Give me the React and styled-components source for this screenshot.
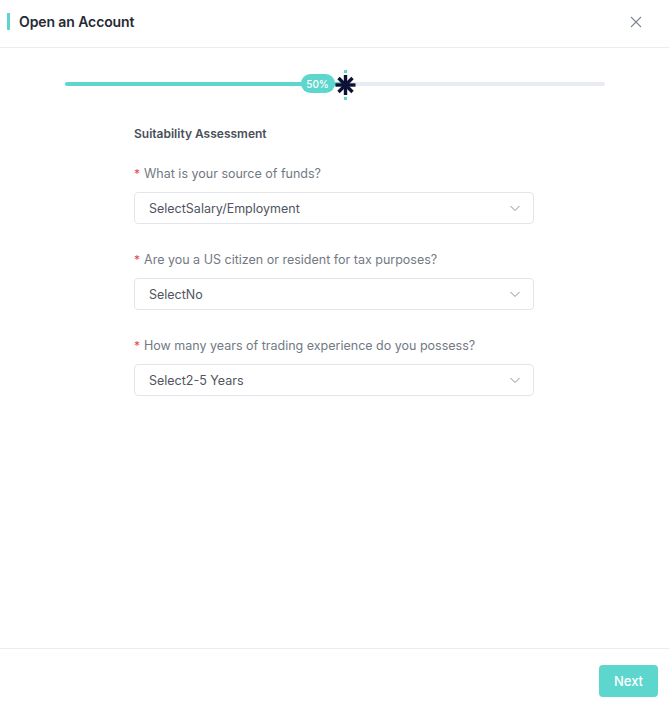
import React from "react";
import styled, { createGlobalStyle } from "styled-components";

const Global = createGlobalStyle`
  html, body { margin: 0; padding: 0; background: #fff; }
  body { font-family: Inter, "Noto Sans", sans-serif; }
  * { box-sizing: border-box; }
`;

const Modal = styled.div`
  width: 669px;
  height: 708px;
  display: flex;
  flex-direction: column;
  background: #fff;
`;

const Header = styled.div`
  height: 48px;
  flex: none;
  display: flex;
  align-items: center;
  justify-content: space-between;
  padding: 0 26px 4px 7px;
  border-bottom: 1px solid #ececec;
`;

const Title = styled.div`
  display: flex;
  align-items: center;
  gap: 9px;
  font-size: 14px;
  font-weight: 600;
  color: #262a33;
  letter-spacing: -0.1px;
`;

const TitleBar = styled.span`
  width: 3px;
  height: 17px;
  background: #5dd6cd;
  display: block;
`;

const CloseBtn = styled.button`
  border: 0;
  background: none;
  padding: 0;
  width: 14px;
  height: 14px;
  display: flex;
  cursor: pointer;
`;

const Body = styled.div`
  flex: 1;
  display: flex;
  flex-direction: column;
  align-items: center;
  padding-top: 22px;
`;

const SliderWrap = styled.div`
  width: 540px;
  height: 28px;
  position: relative;
  display: flex;
  align-items: center;
`;

const Track = styled.div`
  width: 100%;
  height: 4px;
  border-radius: 2px;
  background: #e8ecf2;
  overflow: hidden;
`;

const Fill = styled.div`
  height: 100%;
  background: #5dd6cd;
`;

const Badge = styled.div`
  position: absolute;
  top: 4px;
  left: 236px;
  width: 34px;
  height: 19px;
  border-radius: 10px;
  background: #5dd6cd;
  color: #fff;
  font-size: 10px;
  font-weight: 500;
  display: flex;
  align-items: center;
  justify-content: center;
`;

const Handle = styled.div`
  position: absolute;
  left: 270px;
  top: 0;
  width: 22px;
  height: 30px;
`;

const Form = styled.div`
  width: 400px;
  margin-right: 1px;
  display: flex;
  flex-direction: column;
  padding-top: 28px;
`;

const SectionTitle = styled.div`
  font-size: 12px;
  font-weight: 600;
  color: #4a4f5a;
  margin-bottom: 25px;
`;

const Field = styled.div`
  display: flex;
  flex-direction: column;
  gap: 11px;
  margin-bottom: 28px;
`;

const Label = styled.div`
  font-size: 12.5px;
  color: #737983;
  display: flex;
  gap: 4px;
  align-items: center;
`;

const Req = styled.span`
  color: #e5484d;
  font-size: 12px;
`;

const Select = styled.div`
  height: 32px;
  border: 1px solid #e2e6ec;
  border-radius: 4px;
  display: flex;
  align-items: center;
  justify-content: space-between;
  padding: 0 12px 0 14px;
  font-size: 12.5px;
  color: #50555f;
`;

const Footer = styled.div`
  height: 60px;
  flex: none;
  border-top: 1px solid #ececec;
  display: flex;
  justify-content: flex-end;
  align-items: flex-start;
  padding: 16px 11px 0 0;
`;

const NextBtn = styled.button`
  width: 59px;
  height: 32px;
  border: 0;
  border-radius: 4px;
  background: #5dd6cd;
  color: #fff;
  font-family: inherit;
  font-size: 13px;
  font-weight: 500;
  cursor: pointer;
`;

const Chevron = () => (
  <svg width="12" height="12" viewBox="0 0 12 12" fill="none">
    <path d="M1.5 4 L6 8.5 L10.5 4" stroke="#8a909a" strokeWidth="1" />
  </svg>
);

const fields = [
  { q: "What is your source of funds?", v: "SelectSalary/Employment" },
  { q: "Are you a US citizen or resident for tax purposes?", v: "SelectNo" },
  { q: "How many years of trading experience do you possess?", v: "Select2-5 Years" },
];

export default function App() {
  return (
    <>
      <Global />
      <Modal>
        <Header>
          <Title>
            <TitleBar />
            Open an Account
          </Title>
          <CloseBtn aria-label="close">
            <svg width="14" height="14" viewBox="0 0 14 14">
              <path d="M2 2 L12 12 M12 2 L2 12" stroke="#7d8594" strokeWidth="1.1" />
            </svg>
          </CloseBtn>
        </Header>
        <Body>
          <SliderWrap>
            <Track>
              <Fill style={{ width: "52%" }} />
            </Track>
            <Badge>50%</Badge>
            <Handle>
              <svg width="22" height="30" viewBox="0 0 22 30">
                <rect x="9" y="0" width="3" height="3" fill="#5dd6cd" />
                <rect x="9" y="27" width="3" height="3" fill="#5dd6cd" />
                <g stroke="#0e1034" strokeWidth="3.4" strokeLinecap="butt">
                  <path d="M10.5 5 L10.5 25" />
                  <path d="M0.5 15 L20.5 15" />
                  <path d="M3.5 8 L17.5 22" />
                  <path d="M17.5 8 L3.5 22" />
                </g>
              </svg>
            </Handle>
          </SliderWrap>
          <Form>
            <SectionTitle>Suitability Assessment</SectionTitle>
            {fields.map((f) => (
              <Field key={f.q}>
                <Label>
                  <Req>*</Req>
                  {f.q}
                </Label>
                <Select>
                  {f.v}
                  <Chevron />
                </Select>
              </Field>
            ))}
          </Form>
        </Body>
        <Footer>
          <NextBtn>Next</NextBtn>
        </Footer>
      </Modal>
    </>
  );
}
